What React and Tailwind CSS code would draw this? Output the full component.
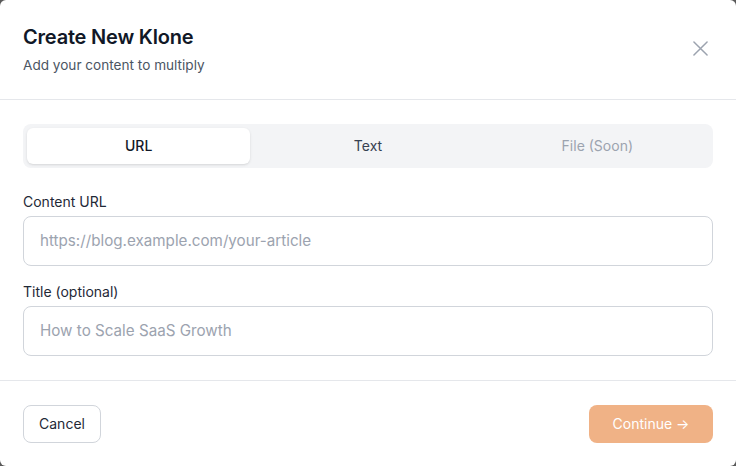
import React from "react";

export default function App() {
  return (
    <div className="w-[736px] h-[466px] bg-[#5a5a5a] font-['Inter',sans-serif]">
      <div className="w-full h-full bg-white rounded-[6px] flex flex-col">
        <div className="flex items-start justify-between px-[23px] pt-[23px] pb-6 border-b border-[#e5e7eb]">
          <div className="flex flex-col gap-1">
            <h2 className="text-xl leading-7 font-semibold text-[#111827] tracking-[-0.01em]">Create New Klone</h2>
            <p className="text-[13.6px] leading-5 text-[#4b5563]">Add your content to multiply</p>
          </div>
          <button className="mt-[18px] mr-[5px] text-[#9ca3af]">
            <svg width="15" height="15" viewBox="0 0 16 16" fill="none" stroke="currentColor" strokeWidth="1.6" strokeLinecap="round">
              <path d="M1 1L15 15M15 1L1 15" />
            </svg>
          </button>
        </div>

        <div className="px-[23px] pt-6 pb-6 border-b border-[#e5e7eb] flex flex-col">
          <div className="grid grid-cols-3 gap-1.5 p-1 bg-[#f3f4f6] rounded-lg h-11">
            <div className="bg-white rounded-md shadow-sm flex items-center justify-center text-sm font-medium text-[#111827]">URL</div>
            <div className="flex items-center justify-center text-sm text-[#374151]">Text</div>
            <div className="flex items-center justify-center text-sm text-[#9ca3af]">File (Soon)</div>
          </div>

          <label className="mt-6 mb-1 text-sm leading-5 text-[#1f2937]">Content URL</label>
          <div className="h-[50px] border border-[#d1d5db] rounded-lg flex items-center px-4 text-[15.2px] text-[#9ca3af]">
            https://blog.example.com/your-article
          </div>

          <label className="mt-4 mb-1 text-sm leading-5 text-[#1f2937]">Title (optional)</label>
          <div className="h-[50px] border border-[#d1d5db] rounded-lg flex items-center px-4 text-[15.2px] text-[#9ca3af]">
            How to Scale SaaS Growth
          </div>
        </div>

        <div className="flex-1 flex items-center justify-between px-[23px]">
          <button className="h-[38px] w-[78px] border border-[#d1d5db] rounded-lg text-sm text-[#1f2937]">Cancel</button>
          <button className="h-[38px] w-[124px] rounded-lg bg-[#f0b286] text-sm text-white">Continue →</button>
        </div>
      </div>
    </div>
  );
}
